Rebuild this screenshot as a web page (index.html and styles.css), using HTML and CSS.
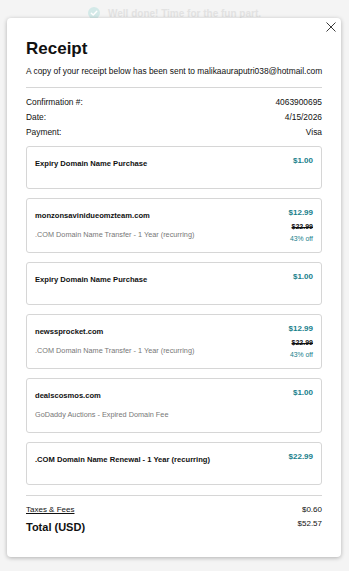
FILE: index.html
```html
<!DOCTYPE html>
<html lang="en">
<head>
    <meta charset="UTF-8">
    <meta name="viewport" content="width=device-width, initial-scale=1.0">
    <title>Receipt</title>
    <link rel="stylesheet" href="styles.css">
</head>
<body>
    <!-- Page behind the modal -->
    <div class="page">
        <div class="page-banner">
            <svg class="banner-check" width="12" height="12" viewBox="0 0 12 12">
                <circle cx="6" cy="6" r="6" fill="#d3e9e8"/>
                <path d="M3.3 6.2 L5.2 8 L8.8 4.3" fill="none" stroke="#fff" stroke-width="1.4" stroke-linecap="round" stroke-linejoin="round"/>
            </svg>
            <span>Well done! Time for the fun part.</span>
        </div>
    </div>

    <!-- Receipt modal -->
    <div class="modal">
        <button class="close" aria-label="Close">
            <svg width="12" height="12" viewBox="0 0 12 12">
                <path d="M1.5 1.5 L10.5 10.5 M10.5 1.5 L1.5 10.5" stroke="#3a3a3a" stroke-width="1"/>
            </svg>
        </button>

        <h1 class="title">Receipt</h1>
        <p class="sent">A copy of your receipt below has been sent to malikaauraputri038@hotmail.com</p>

        <hr class="rule">

        <div class="meta">
            <div class="meta-row"><span>Confirmation #:</span><span>4063900695</span></div>
            <div class="meta-row"><span>Date:</span><span>4/15/2026</span></div>
            <div class="meta-row"><span>Payment:</span><span>Visa</span></div>
        </div>

        <div class="items">
            <div class="item">
                <div class="item-info">
                    <div class="item-name">Expiry Domain Name Purchase</div>
                    <div class="item-desc"></div>
                </div>
                <div class="item-price">
                    <div class="price">$1.00</div>
                </div>
            </div>

            <div class="item">
                <div class="item-info">
                    <div class="item-name">monzonsavinidueomzteam.com</div>
                    <div class="item-desc">.COM Domain Name Transfer - 1 Year (recurring)</div>
                </div>
                <div class="item-price">
                    <div class="price">$12.99</div>
                    <div class="was">$22.99</div>
                    <div class="off">43% off</div>
                </div>
            </div>

            <div class="item">
                <div class="item-info">
                    <div class="item-name">Expiry Domain Name Purchase</div>
                    <div class="item-desc"></div>
                </div>
                <div class="item-price">
                    <div class="price">$1.00</div>
                </div>
            </div>

            <div class="item">
                <div class="item-info">
                    <div class="item-name">newssprocket.com</div>
                    <div class="item-desc">.COM Domain Name Transfer - 1 Year (recurring)</div>
                </div>
                <div class="item-price">
                    <div class="price">$12.99</div>
                    <div class="was">$22.99</div>
                    <div class="off">43% off</div>
                </div>
            </div>

            <div class="item">
                <div class="item-info">
                    <div class="item-name">dealscosmos.com</div>
                    <div class="item-desc">GoDaddy Auctions - Expired Domain Fee</div>
                </div>
                <div class="item-price">
                    <div class="price">$1.00</div>
                </div>
            </div>

            <div class="item">
                <div class="item-info">
                    <div class="item-name">.COM Domain Name Renewal - 1 Year (recurring)</div>
                    <div class="item-desc"></div>
                </div>
                <div class="item-price">
                    <div class="price">$22.99</div>
                </div>
            </div>
        </div>

        <hr class="rule rule-bottom">

        <div class="fees">
            <a class="fees-link" href="#">Taxes &amp; Fees</a>
            <span>$0.60</span>
        </div>
        <div class="total">
            <span class="total-label">Total (USD)</span>
            <span class="total-amount">$52.57</span>
        </div>
    </div>
</body>
</html>
```

FILE: styles.css
```css
:root {
    --text-color: #111111;
    --muted-color: #777777;
    --teal-color: #17808b;
    --line-color: #d6d6d6;
    --backdrop-color: #f4f4f4;
}

* {
    margin: 0;
    padding: 0;
    box-sizing: border-box;
}

body {
    width: 349px;
    height: 571px;
    overflow: hidden;
    background: var(--backdrop-color);
    font-family: 'Liberation Sans', Arial, sans-serif;
    color: var(--text-color);
    position: relative;
}

/* Page behind */
.page {
    height: 100%;
}

.page-banner {
    display: flex;
    justify-content: center;
    align-items: center;
    gap: 8px;
    padding-top: 7px;
    height: 19px;
    font-size: 10px;
    font-weight: bold;
    color: #e2e2e2;
}

/* Modal */
.modal {
    position: absolute;
    top: 18px;
    left: 7px;
    width: 334px;
    height: 539px;
    background: #ffffff;
    border-radius: 4px;
    box-shadow: 0 1px 4px rgba(0, 0, 0, 0.28);
    padding: 21px 19px 22px;
}

.close {
    position: absolute;
    top: 3px;
    right: 4px;
    width: 12px;
    height: 12px;
    border: none;
    background: none;
    display: flex;
    align-items: center;
    justify-content: center;
}

.title {
    font-size: 17px;
    line-height: 20px;
    font-weight: bold;
}

.sent {
    margin-top: 6px;
    font-size: 8.4px;
    line-height: 12px;
    white-space: nowrap;
}

.rule {
    border: none;
    border-top: 1px solid var(--line-color);
    margin-top: 10px;
}

.meta {
    margin-top: 7px;
}

.meta-row {
    display: flex;
    justify-content: space-between;
    font-size: 8.4px;
    line-height: 15px;
}

/* Line items */
.items {
    display: flex;
    flex-direction: column;
    gap: 9px;
    margin-top: 6px;
}

.item {
    display: flex;
    justify-content: space-between;
    align-items: flex-start;
    border: 1px solid var(--line-color);
    border-radius: 3px;
    padding: 9px 8px 11px 8px;
}

.item-name {
    font-size: 7.6px;
    line-height: 16px;
    font-weight: bold;
}

.item-desc {
    margin-top: 5px;
    font-size: 7.3px;
    line-height: 12px;
    color: var(--muted-color);
}

.item-price {
    text-align: right;
    margin-top: -1px;
    margin-bottom: -5px;
}

.price {
    font-size: 8px;
    line-height: 12px;
    font-weight: bold;
    color: var(--teal-color);
}

.was {
    margin-top: 2px;
    font-size: 7px;
    line-height: 12px;
    font-weight: bold;
    text-decoration: line-through;
}

.off {
    font-size: 6.8px;
    line-height: 12px;
    color: var(--teal-color);
}

/* Totals */
.rule-bottom {
    margin-top: 10px;
}

.fees {
    display: flex;
    justify-content: space-between;
    margin-top: 7px;
    font-size: 8px;
    line-height: 14px;
}

.fees-link {
    color: var(--text-color);
    text-decoration: underline;
}

.total {
    display: flex;
    justify-content: space-between;
    align-items: flex-start;
    margin-top: 1px;
}

.total-label {
    font-size: 11px;
    line-height: 18px;
    font-weight: bold;
}

.total-amount {
    font-size: 8px;
    line-height: 12px;
}
```
